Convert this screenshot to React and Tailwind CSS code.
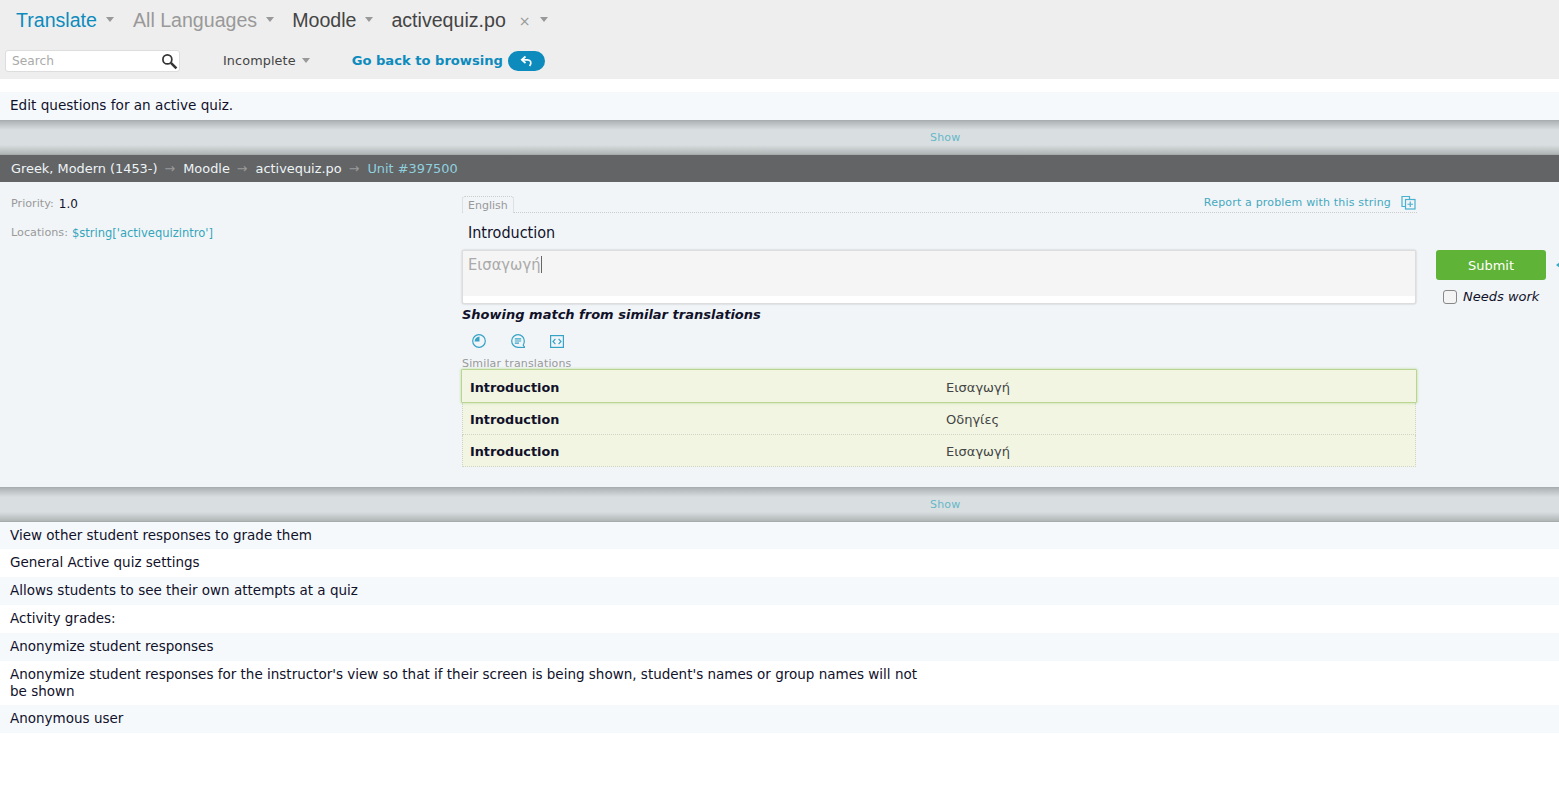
import React from "react";

const dv = "font-['DejaVu_Sans',sans-serif]";
const cond = "font-['DejaVu_Sans_Condensed','DejaVu_Sans',sans-serif]";

function Caret({ className = "" }) {
  return <span className={`inline-block w-0 h-0 border-x-[4px] border-x-transparent border-t-[5px] border-t-[#999] ${className}`} />;
}

function Crumb({ children, color, ml = "" }) {
  return (
    <div className={`flex items-center ${ml}`}>
      <span className={`text-[19.6px] leading-[24px] ${color}`}>{children}</span>
      <Caret className="ml-[9px] mt-[-1px]" />
    </div>
  );
}

function Band() {
  return (
    <div className="h-[34px] flex items-center bg-[linear-gradient(to_bottom,#aeb4b6_0px,#d9dfe0_9px,#d9dfe0_24px,#b0b5b6_33px,#9da2a3_34px)]">
      <span className="ml-[930px] text-[11px] tracking-[0.2px] text-[#66b7c9]">Show</span>
    </div>
  );
}

function Arrow() {
  return <span className="text-[#9a9a9a] text-[12.8px] ml-[7px] mr-[8px]">→</span>;
}

function Sim({ target, selected }) {
  return (
    <div
      className={
        selected
          ? "h-[34px] flex items-center pt-[3px] bg-[#f1f5e2] border border-[#b9d58f] shadow-[0_0_3px_#bcd99a] rounded-[1px] relative"
          : "h-[32px] flex items-center pt-[2px] bg-[#f1f5e2] border-x border-b border-dotted border-[#d0d3c8] mx-px"
      }
    >
      <div className={`font-bold text-[12.8px] text-[#11112a] ${selected ? "w-[484px] pl-[8px]" : "w-[483px] pl-[7px]"}`}>Introduction</div>
      <div className="text-[13px] text-[#444]">{target}</div>
    </div>
  );
}

const rows = [
  "View other student responses to grade them",
  "General Active quiz settings",
  "Allows students to see their own attempts at a quiz",
  "Activity grades:",
  "Anonymize student responses",
  "Anonymize student responses for the instructor's view so that if their screen is being shown, student's names or group names will not be shown",
  "Anonymous user",
];

export default function App() {
  return (
    <div className={`${dv} min-h-[794px] bg-white text-[#11112a] overflow-hidden`}>
      {/* Header */}
      <header className="h-[79px] bg-[#eeeeee]">
        <div className="h-[40px] flex items-center pl-[16px] font-['Liberation_Sans',sans-serif]">
          <Crumb color="text-[#0d8bbd]">Translate</Crumb>
          <Crumb color="text-[#999]" ml="ml-[19px]">All Languages</Crumb>
          <Crumb color="text-[#444]" ml="ml-[18px]">Moodle</Crumb>
          <span className="ml-[18px] text-[19.6px] leading-[24px] text-[#444]">activequiz.po</span>
          <span className={`${dv} ml-[13px] mt-[3px] text-[14px] text-[#999]`}>×</span>
          <Caret className="ml-[9px] mt-[-1px]" />
        </div>
        <div className="flex items-center h-[39px] pt-[3px]">
          <div className="ml-[5px] w-[175px] h-[22px] bg-white border border-[#ddd] rounded-[3px] flex items-center justify-between pl-[6px] pr-[1px]">
            <span className="text-[12.2px] text-[#aaa]">Search</span>
            <svg width="17" height="17" viewBox="0 0 16 16" fill="none" stroke="#333">
              <circle cx="6" cy="6" r="4.2" strokeWidth="1.6" />
              <path d="M9.3 9.3 14.5 14.5" strokeWidth="2.4" />
            </svg>
          </div>
          <span className="ml-[43px] text-[12.8px] text-[#444] tracking-[0.1px]">Incomplete</span>
          <Caret className="ml-[6px] mb-[2px]" />
          <span className="ml-[42px] text-[13.1px] font-bold text-[#0d8bbd]">Go back to browsing</span>
          <span className="ml-[5px] w-[37px] h-[20px] rounded-full bg-[#0d8bbd] flex items-center justify-center">
            <svg width="13" height="13" viewBox="0 0 13 13" fill="none" stroke="#fff" strokeWidth="1.7">
              <path d="M5.5 1.5 1.8 4.8 5.5 8" />
              <path d="M2.5 4.8H7.5C10.8 4.8 12 8 9.6 11" />
            </svg>
          </span>
        </div>
      </header>

      <div className="mt-[13px] h-[28px] bg-[#f5f9fc] pl-[10px] text-[13.6px] leading-[27px]">Edit questions for an active quiz.</div>

      <div className="h-px bg-[#a9aeaf]" />
      <Band />

      {/* Unit header */}
      <div className="h-[27px] bg-[#636466] flex items-center pl-[11px] text-[12.9px] text-[#eef4f6]">
        <span>Greek, Modern (1453-)</span>
        <Arrow />
        <span>Moodle</span>
        <Arrow />
        <span>activequiz.po</span>
        <Arrow />
        <span className="text-[#8fd0df]">Unit #397500</span>
      </div>

      {/* Editor */}
      <div className="h-[305px] bg-[#f1f5f8] flex">
        <div className="w-[462px] pl-[11px] pt-[14px] text-[11.2px]">
          <div className="h-[16px] flex items-center">
            <span className="text-[#999]">Priority:</span>
            <span className="ml-[5px] text-[12px] text-[#11112a]">1.0</span>
          </div>
          <div className="mt-[14px] h-[16px] flex items-center -translate-y-px">
            <span className="text-[#999]">Locations:</span>
            <span className={`ml-[4px] text-[12.8px] text-[#35a5bb] ${cond}`}>$string['activequizintro']</span>
          </div>
        </div>

        <div className="w-[955px]">
          <div className="mt-[14px] h-[17px] border-b border-dotted border-[#ccc] flex justify-between">
            <span className="h-[17px] px-[5px] border border-b-0 border-dotted border-[#ccc] rounded-t-[3px] bg-[#f1f5f8] text-[11px] leading-[18px] text-[#999]">English</span>
            <div className="flex items-start -mt-[1px]">
              <span className="text-[11px] leading-[15px] tracking-[0.18px] text-[#45a9bf]">Report a problem with this string</span>
              <svg className="ml-[10px] mr-[1px]" width="15" height="15" viewBox="0 0 15 15" fill="none" stroke="#4ab0cf" strokeWidth="1.2">
                <path d="M4.5 11.5H1V1.5H8.5V4.5" />
                <rect x="4.5" y="4.5" width="9.5" height="9.5" />
                <path d="M9.25 6.5V12M6.5 9.25H12" />
              </svg>
            </div>
          </div>

          <div className={`mt-[10px] pl-[6px] text-[16px] leading-[20px] text-[#11112a] ${cond}`}>Introduction</div>

          <div className="mt-[7px] h-[54px] mr-px rounded-[2px] border border-[#ddd] shadow-[0_0_2px_#bbb] bg-white overflow-hidden">
            <div className={`h-[45px] bg-[#f5f5f5] pl-[5px] pt-[2px] text-[16.4px] leading-[24px] text-[#aaa] ${cond}`}>
              Εισαγωγή<span className="inline-block w-px h-[17px] bg-[#666] align-[-3px]" />
            </div>
          </div>

          <div className="mt-[2px] text-[13px] leading-[18px] font-bold italic text-[#11112a]">Showing match from similar translations</div>

          <div className="mt-[9px] h-[16px] flex items-center pl-[10px] gap-[25px]">
            <svg width="14" height="14" viewBox="0 0 14 14" fill="none" stroke="#36a3c6" strokeWidth="1.2">
              <circle cx="7" cy="7" r="6.3" />
              <path d="M7.5 7.5V2.6A5 5 0 0 0 2.6 7.5Z" fill="#36a3c6" stroke="none" />
            </svg>
            <svg width="14" height="14" viewBox="0 0 14 14" fill="none" stroke="#36a3c6" strokeWidth="1.2">
              <path d="M7 13.3A6.3 6.3 0 1 1 13.3 7C13.3 8.6 12.9 10 12.2 11L13.8 13.6Z" />
              <path d="M3.8 4.8H10.2M3.8 7H10.2M3.8 9.2H8" />
            </svg>
            <svg width="14" height="13" viewBox="0 0 14 13" fill="none" stroke="#36a3c6" strokeWidth="1.2">
              <rect x="0.6" y="0.6" width="12.8" height="11.8" />
              <path d="M5.4 3.8 3 6.5 5.4 9.2M8.6 3.8 11 6.5 8.6 9.2" />
            </svg>
          </div>

          <div className="mt-[8px] text-[11px] leading-[14px] text-[#999] tracking-[0.15px]">Similar translations</div>

          <div className="-ml-px mt-[-2px] w-[956px] relative">
            <Sim target="Εισαγωγή" selected />
            <Sim target="Οδηγίες" />
            <Sim target="Εισαγωγή" />
          </div>
        </div>

        <div className="w-[142px] relative">
          <button className="mt-[68px] ml-[19px] w-[110px] h-[30px] pt-[2px] rounded-[3px] bg-[#5fb336] text-white text-[13px] block">Submit</button>
          <div className="ml-[26px] mt-[8px] flex items-center h-[16px] translate-y-px">
            <span className="w-[14px] h-[14px] rounded-[3px] border border-[#888] bg-[#f4f4f4]" />
            <span className="ml-[6px] text-[13px] italic text-[#11112a]">Needs work</span>
          </div>
          <span className="absolute left-[139px] top-[80px] w-0 h-0 border-y-[3px] border-y-transparent border-r-[4px] border-r-[#3fa7c4]" />
        </div>
      </div>

      <div className="h-px bg-[#a9aeaf]" />
      <Band />

      <div className="text-[13.5px] leading-[16px]">
        {rows.map((r, i) => (
          <div
            key={r}
            className={`pl-[10px] pt-[5px] ${i === 0 ? "pb-[6px]" : i === 5 ? "pb-[5px] leading-[17px]" : "pb-[7px]"} ${i % 2 === 0 ? "bg-[#f5f9fc]" : "bg-white"}`}
          >
            <div className="w-[925px]">{r}</div>
          </div>
        ))}
      </div>
    </div>
  );
}
